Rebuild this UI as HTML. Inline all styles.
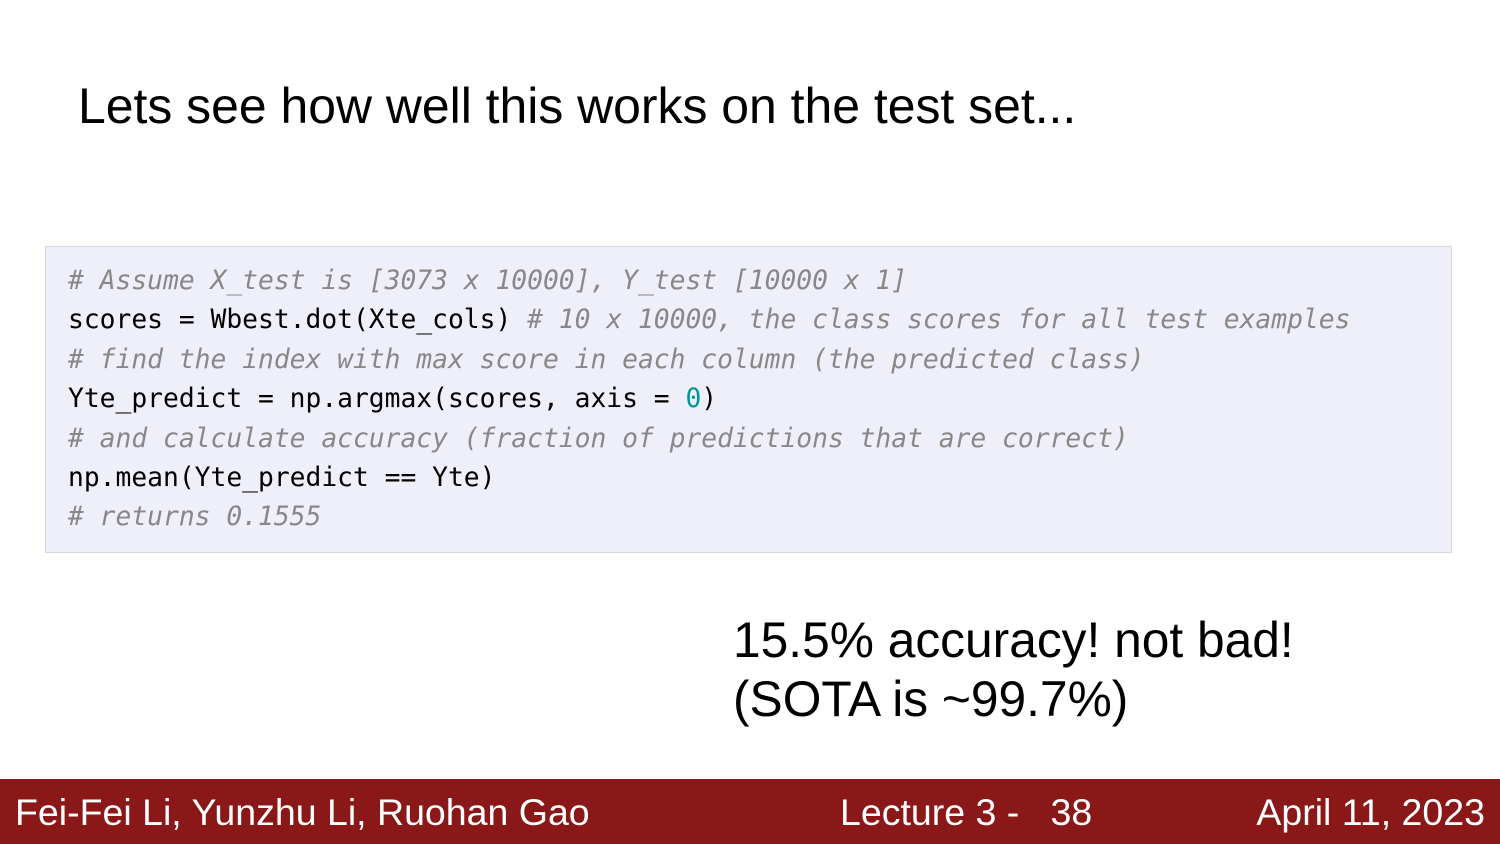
<!DOCTYPE html>
<html><head><meta charset="utf-8"><style>
body{margin:0;width:1500px;height:844px;position:relative;background:#fff;overflow:hidden;font-family:"Liberation Sans",sans-serif}
.t{position:absolute;left:78px;top:77px;font-size:49.9px;color:#000;white-space:nowrap}
.code{position:absolute;left:45px;top:246px;width:1407px;height:307px;background:#eeeff9;border:1px solid #d6d7e0;box-sizing:border-box}
pre{margin:0;position:absolute;left:22px;top:15px;font-family:"DejaVu Sans Mono",monospace;font-size:26.3px;line-height:39.4px;color:#000}
.c{color:#888;font-style:italic}
.n{color:#099}
.r{position:absolute;left:733px;top:611px;font-size:49.7px;line-height:59px;color:#000;white-space:nowrap}
.f{position:absolute;left:0;top:779px;width:1500px;height:65px;background:#8b1818;color:#fff;font-size:37.5px}
.f span{position:absolute;top:12px;white-space:nowrap}
</style></head><body>
<div class="t">Lets see how well this works on the test set...</div>
<div class="code"><pre><span class="c"># Assume X_test is [3073 x 10000], Y_test [10000 x 1]</span>
scores = Wbest.dot(Xte_cols) <span class="c"># 10 x 10000, the class scores for all test examples</span>
<span class="c"># find the index with max score in each column (the predicted class)</span>
Yte_predict = np.argmax(scores, axis = <span class="n">0</span>)
<span class="c"># and calculate accuracy (fraction of predictions that are correct)</span>
np.mean(Yte_predict == Yte)
<span class="c"># returns 0.1555</span></pre></div>
<div class="r">15.5% accuracy! not bad!<br>(SOTA is ~99.7%)</div>
<div class="f"><span style="left:15px">Fei-Fei Li, Yunzhu Li, Ruohan Gao</span><span style="left:840px">Lecture 3 -&nbsp;&nbsp;&nbsp;38</span><span style="right:15px">April 11, 2023</span></div>
</body></html>
